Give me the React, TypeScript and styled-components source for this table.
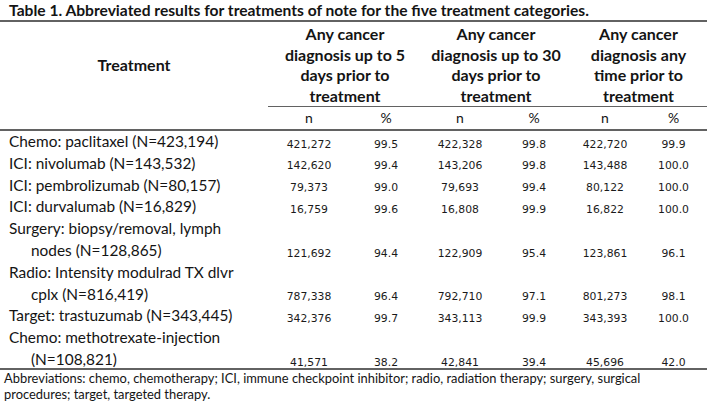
import React from 'react';
import styled, { createGlobalStyle } from 'styled-components';

const GlobalStyle = createGlobalStyle`
  html, body {
    margin: 0;
    padding: 0;
    background: #ffffff;
  }
  body {
    font-family: Lato, "Open Sans", sans-serif;
    color: #141414;
  }
`;

const COLS = '268px 82px 72px 76px 72px 70px 67px';

const Page = styled.div`
  width: 708px;
  height: 402px;
  overflow: hidden;
`;

const Title = styled.div`
  padding-left: 9px;
  height: 20px;
  font-size: 15.6px;
  font-weight: 700;
  line-height: 20px;
  white-space: nowrap;
`;

const Table = styled.div`
  display: grid;
  grid-template-columns: ${COLS};
  width: 707px;
  border-top: 2px solid #626262;
  border-bottom: 2px solid #626262;
  font-size: 15.4px;
`;

const TreatmentHead = styled.div`
  display: flex;
  align-items: center;
  justify-content: center;
  font-size: 16px;
  font-weight: 700;
`;

const GroupHead = styled.div`
  grid-column: span 2;
  padding-top: 2px;
  text-align: center;
  font-size: 16px;
  font-weight: 700;
  line-height: 20.5px;
  border-bottom: 1px solid #626262;
`;

const Line = styled.span`
  display: block;
  white-space: nowrap;
`;

const SubHead = styled.div`
  height: 22px;
  line-height: 22px;
  text-align: center;
  font-size: 14px;
  border-bottom: 2px solid #626262;
`;

const Label = styled.div<{ $last?: boolean }>`
  padding-left: 9px;
  line-height: 21.8px;
  margin-bottom: ${p => (p.$last ? '-3px' : '0')};
`;

const LabelLine = styled.span<{ $indent?: boolean }>`
  display: block;
  white-space: nowrap;
  padding-left: ${p => (p.$indent ? '22px' : '0')};
`;

const Num = styled.div<{ $last?: boolean }>`
  align-self: end;
  text-align: center;
  font-family: "DejaVu Sans", Verdana, sans-serif;
  font-size: 10.8px;
  line-height: 17.2px;
  color: #1a1a1a;
  margin-bottom: ${p => (p.$last ? '-3px' : '0')};
`;

const Footnote = styled.div`
  padding-left: 4px;
  font-size: 12.9px;
  line-height: 16px;
  width: 655px;
`;

const groups = [
  ['Any cancer', 'diagnosis up to 5', 'days prior to', 'treatment'],
  ['Any cancer', 'diagnosis up to 30', 'days prior to', 'treatment'],
  ['Any cancer', 'diagnosis any', 'time prior to', 'treatment'],
];

const rows: { label: string[]; values: string[] }[] = [
  { label: ['Chemo: paclitaxel (N=423,194)'], values: ['421,272', '99.5', '422,328', '99.8', '422,720', '99.9'] },
  { label: ['ICI: nivolumab (N=143,532)'], values: ['142,620', '99.4', '143,206', '99.8', '143,488', '100.0'] },
  { label: ['ICI: pembrolizumab (N=80,157)'], values: ['79,373', '99.0', '79,693', '99.4', '80,122', '100.0'] },
  { label: ['ICI: durvalumab (N=16,829)'], values: ['16,759', '99.6', '16,808', '99.9', '16,822', '100.0'] },
  { label: ['Surgery: biopsy/removal, lymph', 'nodes (N=128,865)'], values: ['121,692', '94.4', '122,909', '95.4', '123,861', '96.1'] },
  { label: ['Radio: Intensity modulrad TX dlvr', 'cplx (N=816,419)'], values: ['787,338', '96.4', '792,710', '97.1', '801,273', '98.1'] },
  { label: ['Target: trastuzumab (N=343,445)'], values: ['342,376', '99.7', '343,113', '99.9', '343,393', '100.0'] },
  { label: ['Chemo: methotrexate-injection', '(N=108,821)'], values: ['41,571', '38.2', '42,841', '39.4', '45,696', '42.0'] },
];

export default function App() {
  return (
    <Page>
      <GlobalStyle />
      <Title>Table 1. Abbreviated results for treatments of note for the five treatment categories.</Title>
      <Table>
        <TreatmentHead>Treatment</TreatmentHead>
        {groups.map((g, i) => (
          <GroupHead key={i}>
            {g.map((l, j) => (
              <Line key={j}>{l}</Line>
            ))}
          </GroupHead>
        ))}
        <SubHead />
        {['n', '%', 'n', '%', 'n', '%'].map((s, i) => (
          <SubHead key={i}>{s}</SubHead>
        ))}
        {rows.map((r, i) => {
          const last = i === rows.length - 1;
          return (
            <React.Fragment key={i}>
              <Label $last={last}>
                {r.label.map((l, j) => (
                  <LabelLine key={j} $indent={j > 0}>{l}</LabelLine>
                ))}
              </Label>
              {r.values.map((v, j) => (
                <Num key={j} $last={last}>{v}</Num>
              ))}
            </React.Fragment>
          );
        })}
      </Table>
      <Footnote>
        Abbreviations: chemo, chemotherapy; ICI, immune checkpoint inhibitor; radio, radiation therapy; surgery, surgical procedures; target, targeted therapy.
      </Footnote>
    </Page>
  );
}
